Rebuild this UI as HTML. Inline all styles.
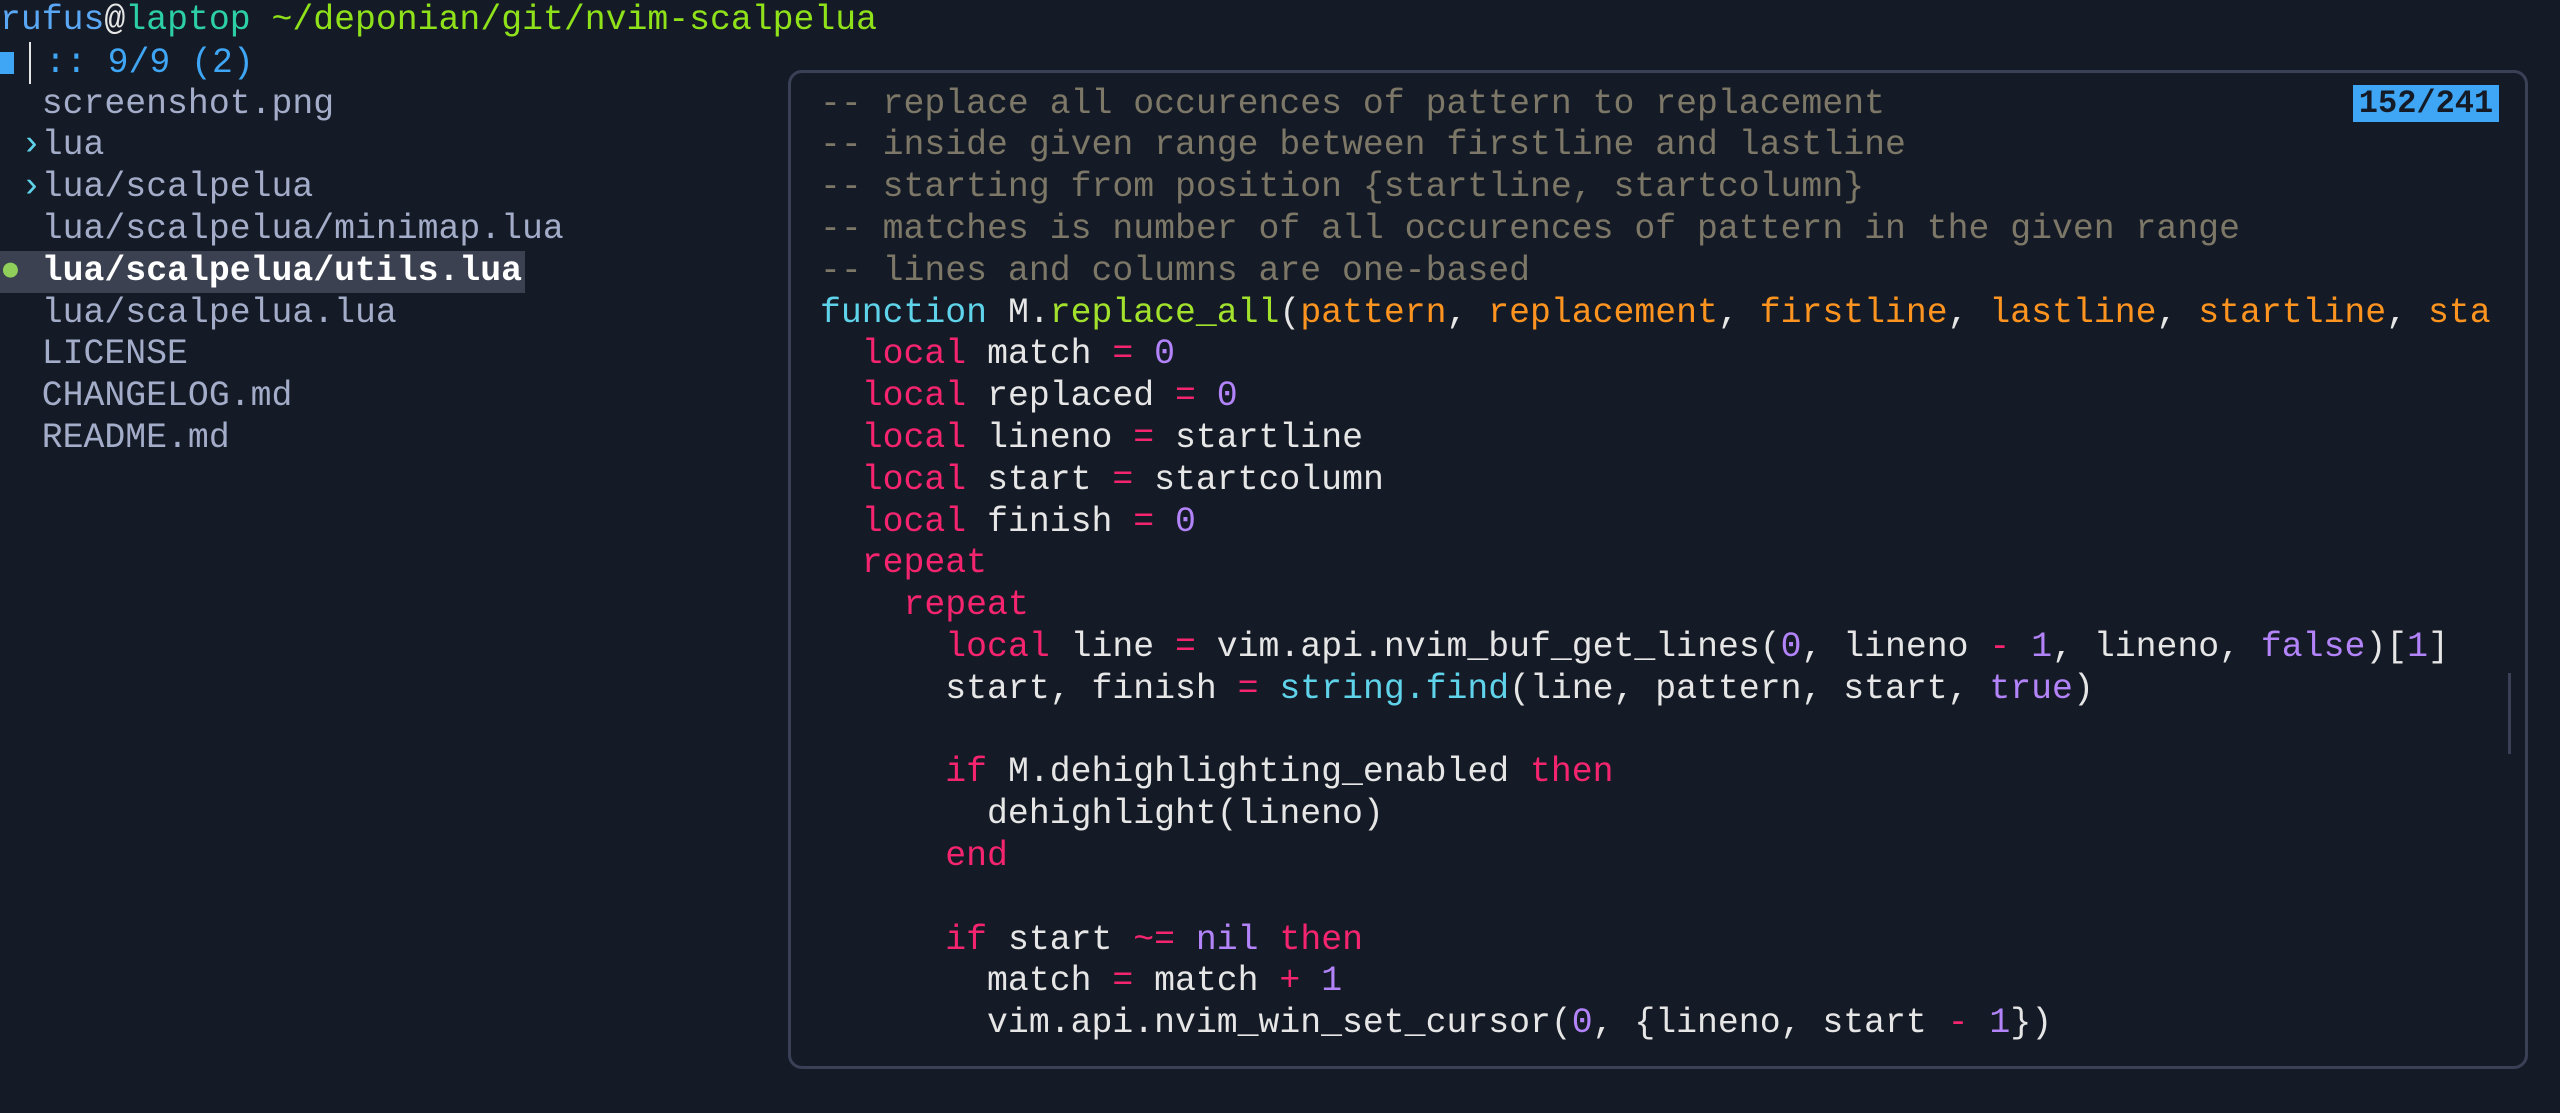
<!DOCTYPE html>
<html><head><meta charset="utf-8"><style>
html,body{margin:0;padding:0;background:#151b26;width:2560px;height:1113px;overflow:hidden}
body{font-family:"Liberation Mono","DejaVu Sans Mono",monospace;font-size:34.8px;color:#e6e6e6}
.l{position:absolute;white-space:pre;height:41.8px;line-height:41.8px}
.t{color:#a3acc8}
.c{color:#7c7766}
.k{color:#f5246f}
.f{color:#5fd3ea}
.g{color:#a2e22c}
.o{color:#fd9420}
.n{color:#b383fa}
#pop{position:absolute;left:788px;top:70px;width:1740px;height:999px;border:3px solid #3a4157;border-radius:14px;box-sizing:border-box}
#clip{position:absolute;left:820px;top:0;width:1680px;height:1113px;overflow:hidden}
</style></head><body>
<div class="l" style="top:0;left:0"><span style="color:#5aa8f5">rufus</span><span style="color:#e6e6e6">@</span><span style="color:#2ccfa6">laptop</span> <span style="color:#8fe21a">~/deponian/git/nvim-scalpelua</span></div>
<div class="l" style="top:41.8px;left:0"><span style="display:inline-block;width:14px;height:22px;background:#3fa6f5;vertical-align:middle;margin-right:15px"></span><span style="display:inline-block;width:2px;height:42px;background:#e6e6e6;vertical-align:middle;margin-right:14px"></span><span style="color:#3fa6f5">:: 9/9 (2)</span></div>
<div class="l t" style="top:83.6px;left:0">  screenshot.png</div>
<div class="l t" style="top:125.4px;left:0"> <span class="f">›</span>lua</div>
<div class="l t" style="top:167.2px;left:0"> <span class="f">›</span>lua/scalpelua</div>
<div class="l t" style="top:209px;left:0">  lua/scalpelua/minimap.lua</div>
<div class="l" style="top:250.8px;left:0;width:525px;background:#3b4150"><span style="color:#8fcf5a">●</span> <b style="color:#fff">lua/scalpelua/utils.lua</b></div>
<div class="l t" style="top:292.6px;left:0">  lua/scalpelua.lua</div>
<div class="l t" style="top:334.4px;left:0">  LICENSE</div>
<div class="l t" style="top:376.2px;left:0">  CHANGELOG.md</div>
<div class="l t" style="top:418px;left:0">  README.md</div>

<div id="pop"></div>
<div id="clip">
<div class="l c" style="top:83.6px">-- replace all occurences of pattern to replacement</div>
<div class="l c" style="top:125.4px">-- inside given range between firstline and lastline</div>
<div class="l c" style="top:167.2px">-- starting from position {startline, startcolumn}</div>
<div class="l c" style="top:209px">-- matches is number of all occurences of pattern in the given range</div>
<div class="l c" style="top:250.8px">-- lines and columns are one-based</div>
<div class="l" style="top:292.6px"><span class="f">function</span> M.<span class="g">replace_all</span>(<span class="o">pattern</span>, <span class="o">replacement</span>, <span class="o">firstline</span>, <span class="o">lastline</span>, <span class="o">startline</span>, <span class="o">sta</span></div>
<div class="l" style="top:334.4px">  <span class="k">local</span> match <span class="k">=</span> <span class="n">0</span></div>
<div class="l" style="top:376.2px">  <span class="k">local</span> replaced <span class="k">=</span> <span class="n">0</span></div>
<div class="l" style="top:418px">  <span class="k">local</span> lineno <span class="k">=</span> startline</div>
<div class="l" style="top:459.8px">  <span class="k">local</span> start <span class="k">=</span> startcolumn</div>
<div class="l" style="top:501.6px">  <span class="k">local</span> finish <span class="k">=</span> <span class="n">0</span></div>
<div class="l" style="top:543.4px">  <span class="k">repeat</span></div>
<div class="l" style="top:585.2px">    <span class="k">repeat</span></div>
<div class="l" style="top:627px">      <span class="k">local</span> line <span class="k">=</span> vim.api.nvim_buf_get_lines(<span class="n">0</span>, lineno <span class="k">-</span> <span class="n">1</span>, lineno, <span class="n">false</span>)[<span class="n">1</span>]</div>
<div class="l" style="top:668.8px">      start, finish <span class="k">=</span> <span class="f">string.find</span>(line, pattern, start, <span class="n">true</span>)</div>
<div class="l" style="top:752.4px">      <span class="k">if</span> M.dehighlighting_enabled <span class="k">then</span></div>
<div class="l" style="top:794.2px">        dehighlight(lineno)</div>
<div class="l" style="top:836px">      <span class="k">end</span></div>
<div class="l" style="top:919.6px">      <span class="k">if</span> start <span class="k">~=</span> <span class="n">nil</span> <span class="k">then</span></div>
<div class="l" style="top:961.4px">        match <span class="k">=</span> match <span class="k">+</span> <span class="n">1</span></div>
<div class="l" style="top:1003.2px">        vim.api.nvim_win_set_cursor(<span class="n">0</span>, {lineno, start <span class="k">-</span> <span class="n">1</span>})</div>
</div>
<div style="position:absolute;left:2353px;top:85px;width:146px;height:37px;background:#3fa6f5;color:#151b26;line-height:37px;text-align:center;white-space:pre;font-weight:bold;font-size:32px">152/241</div>
<div style="position:absolute;left:2508px;top:673px;width:3px;height:81px;background:#3a4157"></div>
</body></html>
